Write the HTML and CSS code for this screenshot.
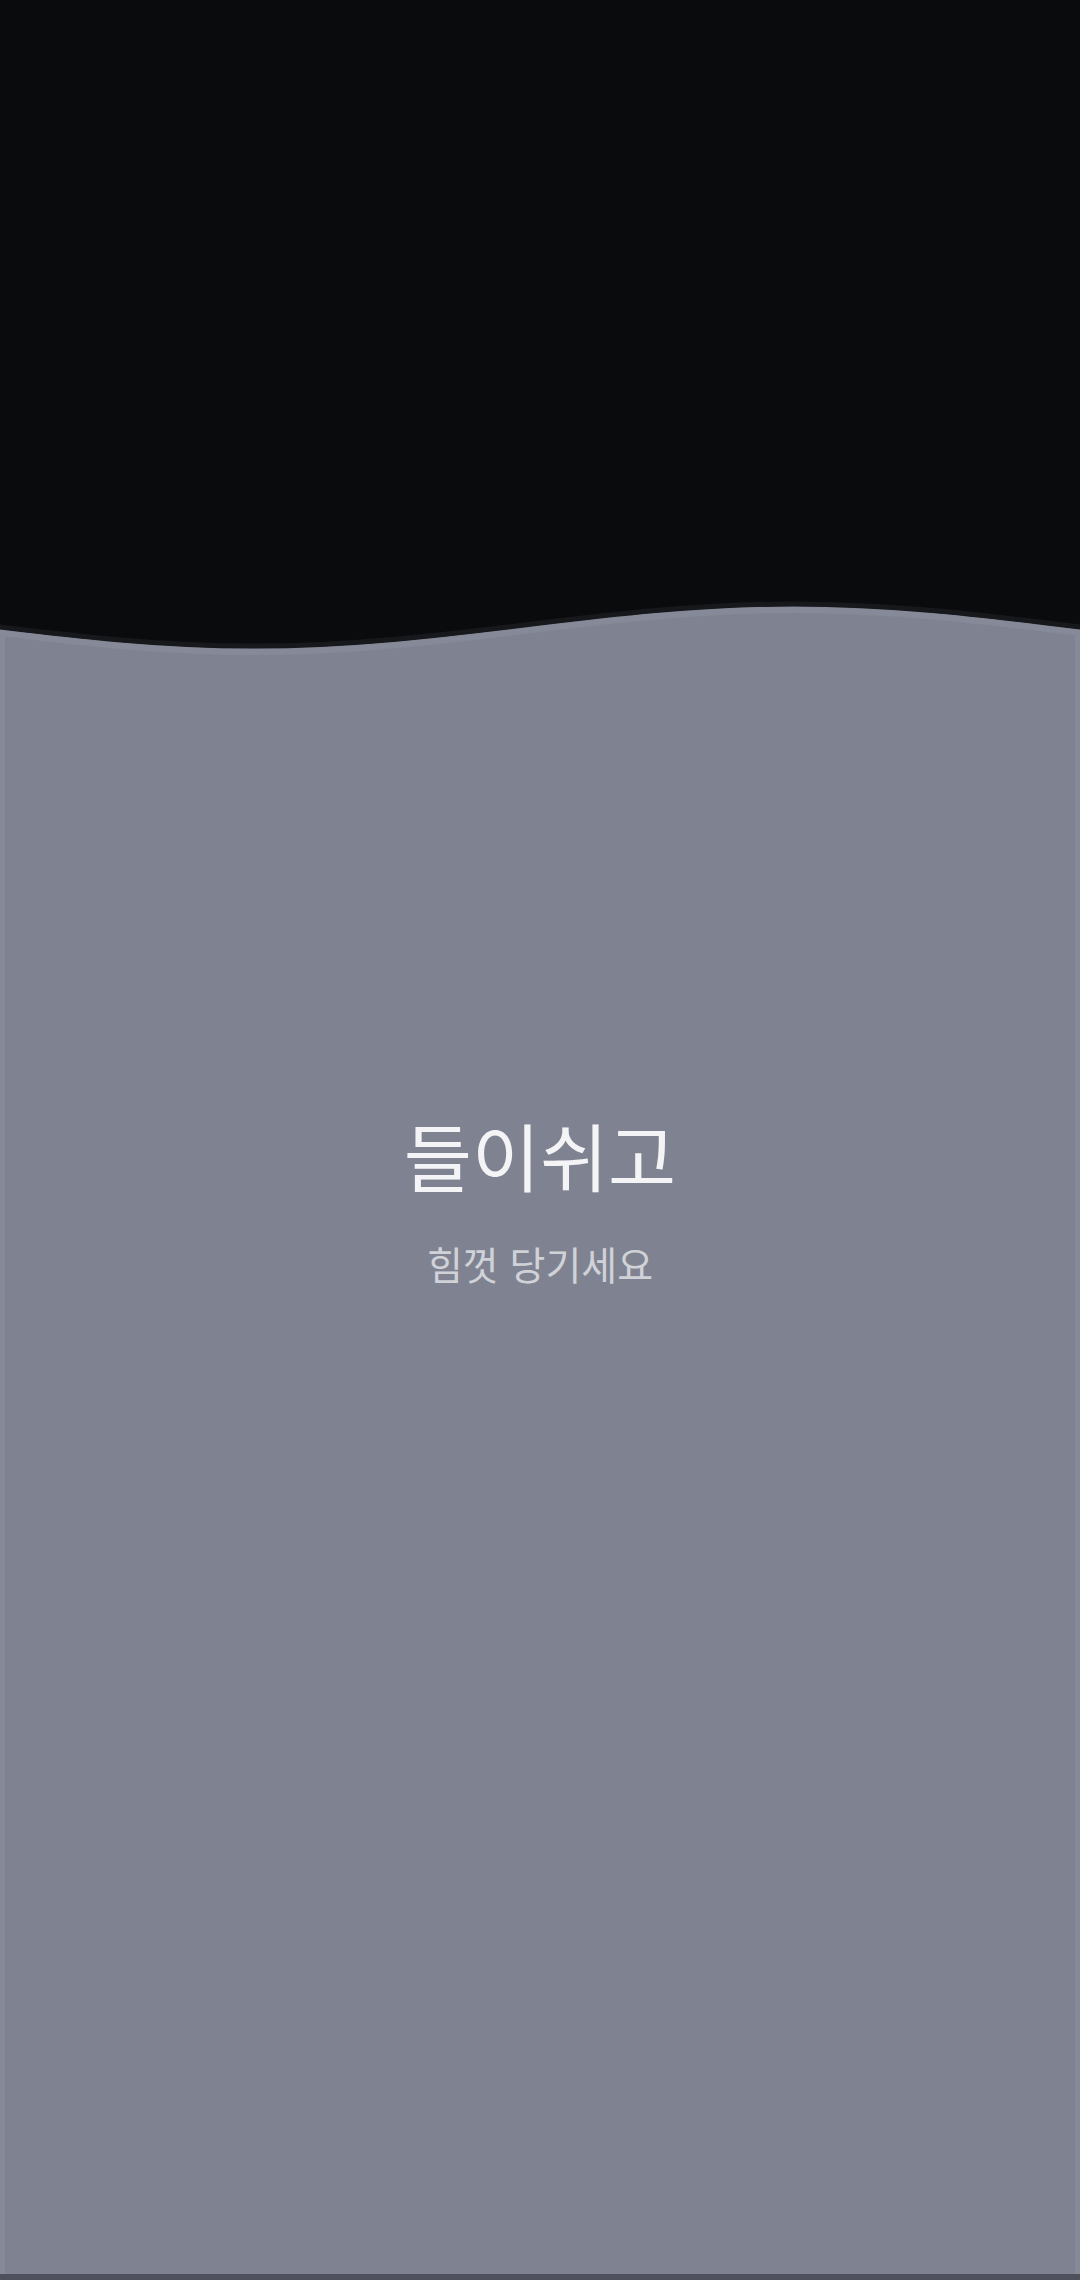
FILE: index.html
```html
<!DOCTYPE html>
<html lang="ko">
<head>
  <meta charset="UTF-8" />
  <meta name="viewport" content="width=device-width, initial-scale=1.0"/>
  <title>호흡</title>
  <link rel="stylesheet" href="styles.css">
</head>
<body>
  <div class="screen">
    <svg class="wave" width="1080" height="2280" viewBox="0 0 1080 2280">
      <defs>
        <clipPath id="water-clip">
          <path d="M-286 606 C-92 606 60 648 254 648 C448 648 600 606 794 606 C988 606 1140 648 1334 648 L1334 2280 L-286 2280 Z"/>
        </clipPath>
      </defs>
      <!-- water level -->
      <path class="water" d="M-286 606 C-92 606 60 648 254 648 C448 648 600 606 794 606 C988 606 1140 648 1334 648 L1334 2280 L-286 2280 Z"/>
      <g clip-path="url(#water-clip)">
        <rect class="side" x="0" y="600" width="5" height="1674"/>
        <rect class="side" x="1075" y="600" width="5" height="1674"/>
      </g>
      <path class="water-glow" d="M-286 610 C-92 610 60 652 254 652 C448 652 600 610 794 610 C988 610 1140 652 1334 652"/>
      <path class="water-edge" d="M-286 604 C-92 604 60 646 254 646 C448 646 600 604 794 604 C988 604 1140 646 1334 646"/>
      <rect class="floor" x="0" y="2274" width="1080" height="6"/>
    </svg>

    <div class="prompt">
      <h1 class="prompt-title">들이쉬고</h1>
      <p class="prompt-sub">힘껏 당기세요</p>
    </div>
  </div>
</body>
</html>
```

FILE: styles.css
```css
html, body {
  margin: 0;
  padding: 0;
  height: 100%;
  overflow: hidden;
  background: #0a0b0d;
  font-family: "Noto Sans CJK KR", "Noto Sans", sans-serif;
}

.screen {
  position: relative;
  width: 1080px;
  height: 2280px;
  background: #0a0b0d;
}

.wave {
  position: absolute;
  top: 0;
  left: 0;
}

.water { fill: #7f8391; }

.water-glow {
  fill: none;
  stroke: #868a98;
  stroke-width: 6;
}

.water-edge {
  fill: none;
  stroke: #17181c;
  stroke-width: 5;
}

.side { fill: #868997; }
.floor { fill: #4e505b; }

.prompt {
  position: relative;
  display: flex;
  flex-direction: column;
  align-items: center;
  padding-top: 1106px;
  text-align: center;
}

.prompt-title {
  margin: 0;
  font-size: 74px;
  font-weight: 400;
  line-height: 96px;
  color: #f4f4f6;
}

.prompt-sub {
  margin: 36px 0 0;
  font-size: 39px;
  font-weight: 400;
  line-height: 50px;
  color: #d0d2d8;
}
```
